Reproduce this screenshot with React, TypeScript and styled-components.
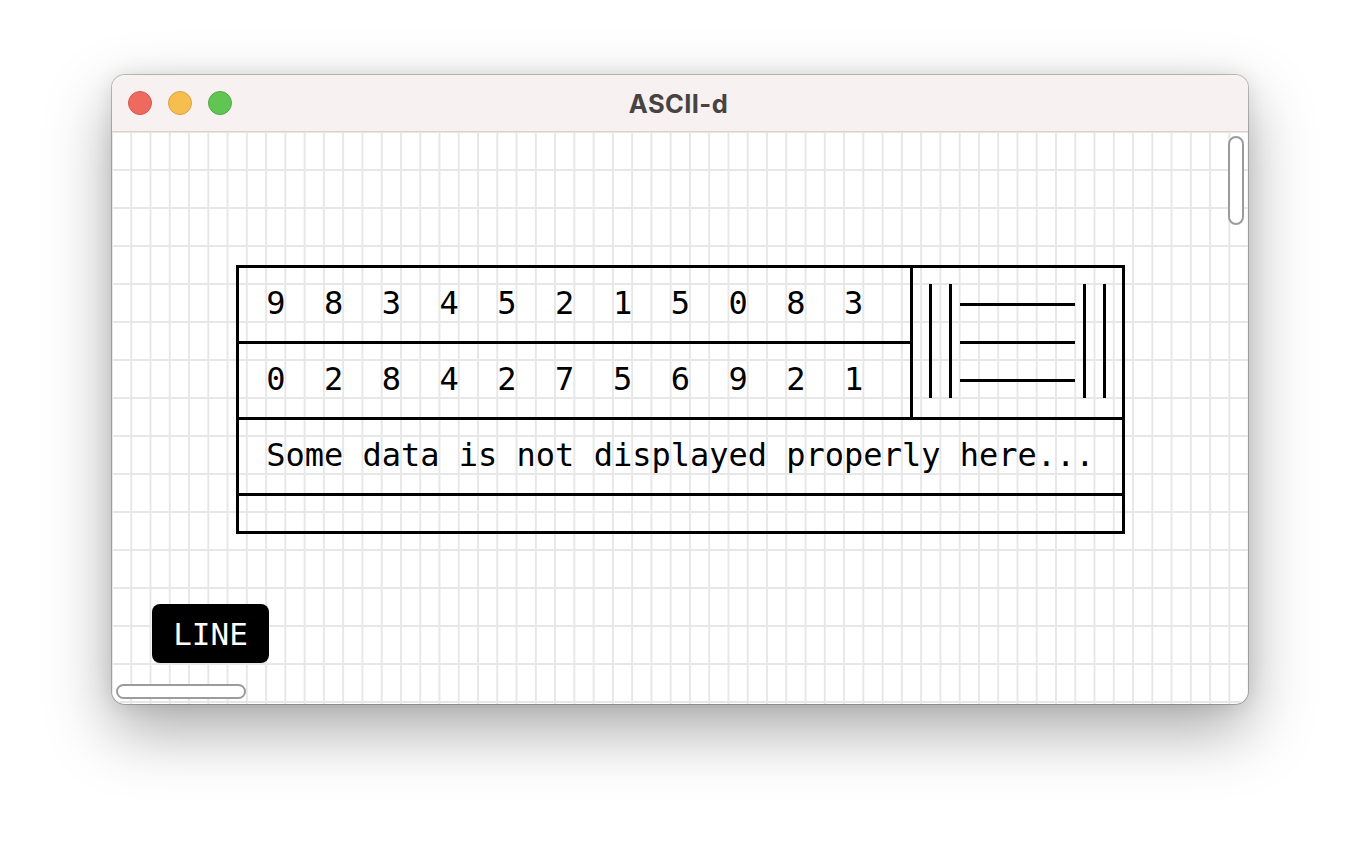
import React from 'react';
import styled, { createGlobalStyle } from 'styled-components';

const CELL_W = 19.27;
const CELL_H = 38;
const STROKE = 3;
const MONO = `'DejaVu Sans Mono', 'Liberation Mono', monospace`;

const DIAGRAM = [
  '┌──────────────────────────────────┬──────────┐',
  '│ 9  8  3  4  5  2  1  5  0  8  3  │││──────│││',
  '├──────────────────────────────────┤││──────│││',
  '│ 0  2  8  4  2  7  5  6  9  2  1  │││──────│││',
  '├──────────────────────────────────┴──────────┤',
  '│ Some data is not displayed properly here... │',
  '├─────────────────────────────────────────────┤',
  '└─────────────────────────────────────────────┘',
];

// which half-segments each box glyph draws: up, down, left, right
const BOX: Record<string, [boolean, boolean, boolean, boolean]> = {
  '─': [false, false, true, true],
  '│': [true, true, false, false],
  '┌': [false, true, false, true],
  '┐': [false, true, true, false],
  '└': [true, false, false, true],
  '┘': [true, false, true, false],
  '├': [true, true, false, true],
  '┤': [true, true, true, false],
  '┬': [false, true, true, true],
  '┴': [true, false, true, true],
  '┼': [true, true, true, true],
};

const GlobalStyle = createGlobalStyle`
  html, body {
    margin: 0;
    background: #ffffff;
  }
  body {
    font-family: 'Inter', 'Liberation Sans', sans-serif;
  }
`;

const Desktop = styled.div`
  width: 1360px;
  height: 852px;
  padding: 75px 0 0 112px;
  box-sizing: border-box;
  overflow: hidden;
`;

const Window = styled.div`
  width: 1136px;
  height: 629px;
  border-radius: 13px;
  overflow: hidden;
  background: #ffffff;
  display: flex;
  flex-direction: column;
  box-shadow: 0 0 0 1px rgba(0, 0, 0, 0.22), 0 26px 64px rgba(0, 0, 0, 0.34),
    0 0 20px rgba(0, 0, 0, 0.1);
`;

const TitleBar = styled.div`
  height: 56px;
  flex-shrink: 0;
  background: #f7f1f1;
  border-bottom: 1px solid #d8d2d2;
  display: grid;
  grid-template-columns: 1fr auto 1fr;
  align-items: center;
  padding: 0 16px;
`;

const Lights = styled.div`
  display: flex;
  gap: 16px;
`;

const Light = styled.span<{ $fill: string; $edge: string }>`
  width: 24px;
  height: 24px;
  border-radius: 50%;
  box-sizing: border-box;
  background: ${(p) => p.$fill};
  border: 1px solid ${(p) => p.$edge};
`;

const Title = styled.div`
  font-size: 25.5px;
  font-weight: 700;
  color: #474343;
  letter-spacing: 0.4px;
  margin-right: 3px;
`;

const Canvas = styled.div`
  flex: 1;
  position: relative;
  overflow: hidden;
  display: grid;
  grid-template-columns: repeat(59, ${CELL_W}px);
  grid-template-rows: repeat(15, ${CELL_H}px);
  background-image: linear-gradient(to right, #e7e7e7 2px, transparent 2px),
    linear-gradient(to bottom, #e7e7e7 2px, transparent 2px);
  background-size: ${CELL_W}px ${CELL_H}px;
  background-position: -1px -1px;
`;

const Diagram = styled.div<{ $col: number; $row: number; $cols: number; $rows: number }>`
  grid-column: ${(p) => p.$col} / span ${(p) => p.$cols};
  grid-row: ${(p) => p.$row} / span ${(p) => p.$rows};
  display: grid;
  grid-template-columns: repeat(${(p) => p.$cols}, ${CELL_W}px);
  grid-template-rows: repeat(${(p) => p.$rows}, ${CELL_H}px);
`;

const Cell = styled.div<{
  $row: number;
  $col: number;
  $up: boolean;
  $down: boolean;
  $left: boolean;
  $right: boolean;
}>`
  grid-row: ${(p) => p.$row};
  grid-column: ${(p) => p.$col};
  position: relative;

  &::before {
    content: '';
    position: absolute;
    display: ${(p) => (p.$left || p.$right ? 'block' : 'none')};
    top: calc(50% - 0.5px);
    height: ${STROKE}px;
    left: ${(p) => (p.$left ? '0' : `calc(50% - ${STROKE / 2}px)`)};
    right: ${(p) => (p.$right ? '0' : `calc(50% - ${STROKE / 2}px)`)};
    background: #000;
  }

  &::after {
    content: '';
    position: absolute;
    display: ${(p) => (p.$up || p.$down ? 'block' : 'none')};
    left: calc(50% - ${STROKE / 2}px);
    width: ${STROKE}px;
    top: ${(p) => (p.$up ? '0' : 'calc(50% - 0.5px)')};
    bottom: ${(p) => (p.$down ? '0' : `calc(50% - ${STROKE - 0.5}px)`)};
    background: #000;
  }
`;

const TextRun = styled.span<{ $row: number; $col: number; $len: number }>`
  grid-row: ${(p) => p.$row};
  grid-column: ${(p) => p.$col} / span ${(p) => p.$len};
  font-family: ${MONO};
  font-size: 32px;
  line-height: ${CELL_H}px;
  color: #000;
  white-space: pre;
`;

const ToolButton = styled.button`
  position: absolute;
  left: 40px;
  bottom: 41px;
  width: 117px;
  height: 59px;
  border: none;
  border-radius: 8px;
  background: #000;
  color: #fff;
  font-family: ${MONO};
  font-size: 31px;
  padding: 0;
  cursor: pointer;
`;

const ScrollThumb = styled.div<{ $vertical?: boolean }>`
  position: absolute;
  box-sizing: border-box;
  background: #ffffff;
  border: 2px solid #9b9b9b;
  border-radius: 9px;
  ${(p) =>
    p.$vertical
      ? 'right: 4px; top: 4px; width: 16px; height: 89px;'
      : 'left: 4px; bottom: 5px; width: 130px; height: 15px;'}
`;

const TEXT_RE = /[^\s─│┌┐└┘├┤┬┴┼](?:[^─│┌┐└┘├┤┬┴┼]*[^\s─│┌┐└┘├┤┬┴┼])?/g;

function renderRow(line: string, r: number) {
  const parts: React.ReactNode[] = [];
  Array.from(line).forEach((ch, c) => {
    const seg = BOX[ch];
    if (!seg) return;
    parts.push(
      <Cell
        key={`b${r}-${c}`}
        $row={r + 1}
        $col={c + 1}
        $up={seg[0]}
        $down={seg[1]}
        $left={seg[2]}
        $right={seg[3]}
      />
    );
  });
  for (const m of line.matchAll(TEXT_RE)) {
    const col = Array.from(line.slice(0, m.index)).length;
    parts.push(
      <TextRun key={`t${r}-${col}`} $row={r + 1} $col={col + 1} $len={m[0].length}>
        {m[0]}
      </TextRun>
    );
  }
  return parts;
}

const App: React.FC = () => {
  return (
    <Desktop>
      <GlobalStyle />
      <Window>
        <TitleBar>
          <Lights>
            <Light $fill="#ef6a5e" $edge="#d6564c" />
            <Light $fill="#f6be4f" $edge="#d9a23f" />
            <Light $fill="#61c554" $edge="#52a943" />
          </Lights>
          <Title>ASCII-d</Title>
          <span />
        </TitleBar>
        <Canvas>
          <Diagram $col={7} $row={4} $cols={47} $rows={DIAGRAM.length}>
            {DIAGRAM.map((line, r) => renderRow(line, r))}
          </Diagram>
          <ToolButton>LINE</ToolButton>
          <ScrollThumb $vertical />
          <ScrollThumb />
        </Canvas>
      </Window>
    </Desktop>
  );
};

export default App;
